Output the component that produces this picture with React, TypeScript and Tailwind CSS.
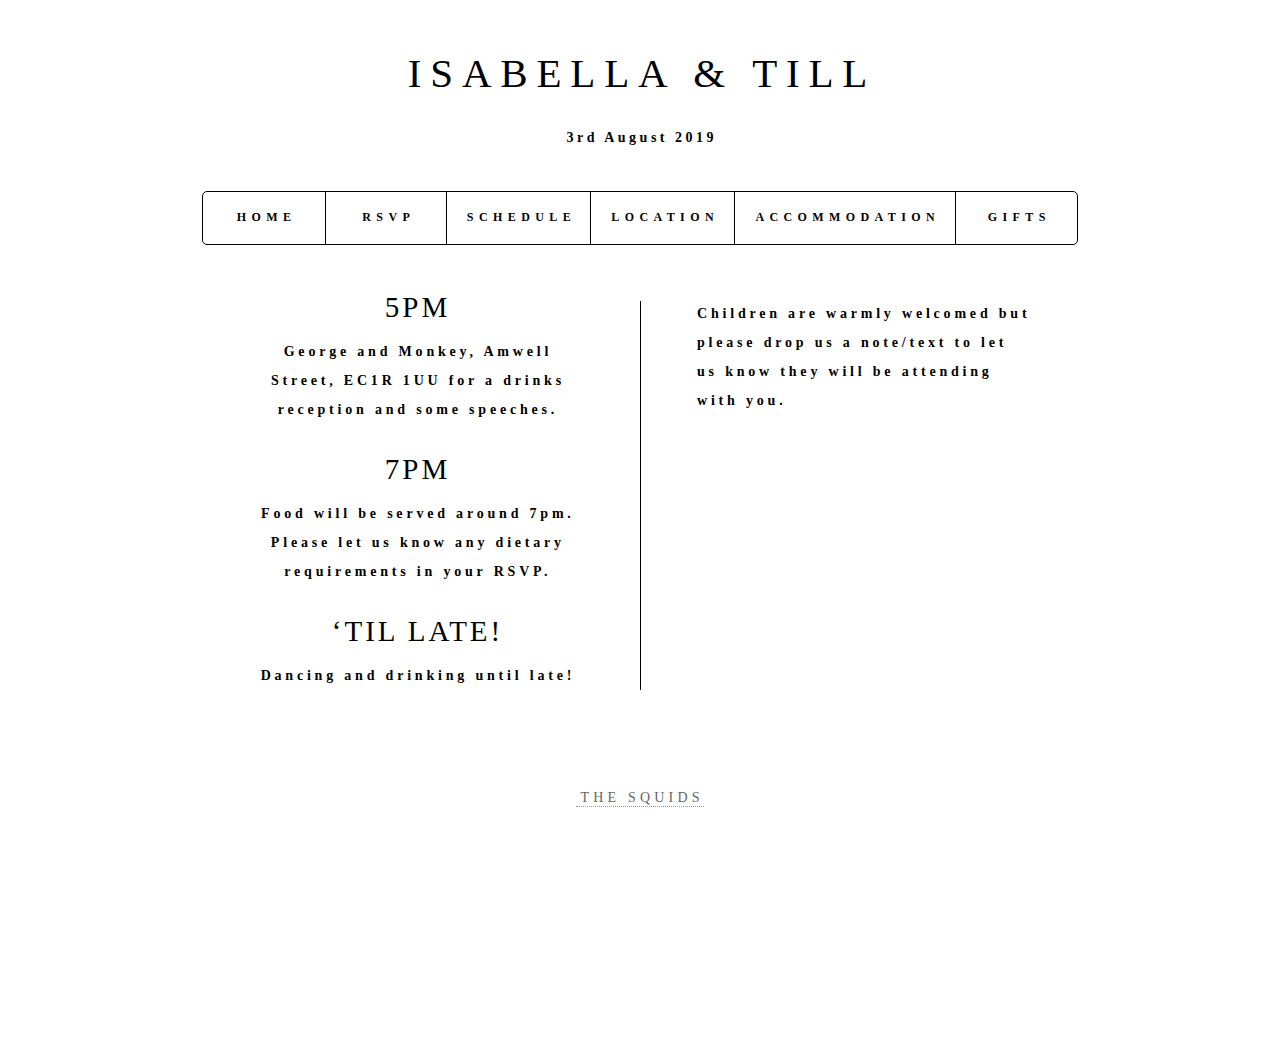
import React from 'react';

const navItems = [
  { label: 'HOME', width: 'w-[122px]' },
  { label: 'RSVP', width: 'w-[122px]' },
  { label: 'SCHEDULE', width: 'w-[144px]' },
  { label: 'LOCATION', width: 'w-[144px]' },
  { label: 'ACCOMMODATION', width: 'w-[222px]' },
  { label: 'GIFTS', width: 'w-[122px]' },
];

const schedule = [
  {
    time: '5PM',
    text: 'George and Monkey, Amwell Street, EC1R 1UU for a drinks reception and some speeches.',
  },
  {
    time: '7PM',
    text: 'Food will be served around 7pm. Please let us know any dietary requirements in your RSVP.',
  },
  {
    time: '‘TIL LATE!',
    text: 'Dancing and drinking until late!',
  },
];

export default function App() {
  return (
    <div className="min-h-screen bg-white text-black font-['Liberation_Serif',serif]">
      <header className="pt-[53px] text-center">
        <h1 className="text-[41px] leading-[41px] tracking-[8.8px] pl-[4px] font-normal">
          ISABELLA &amp; TILL
        </h1>
        <p className="mt-[34px] text-[14px] leading-[20px] tracking-[3.5px] pl-[3.5px] font-bold">
          3rd August 2019
        </p>
      </header>

      <nav className="mx-auto mt-[43px] flex w-[876px] h-[54px] rounded-[5px] border border-black">
        {navItems.map((item, i) => (
          <a
            key={item.label}
            href="#"
            className={`${item.width} flex items-center justify-center pb-[2px] text-[12px] font-bold tracking-[5.4px] pl-[5.4px] ${
              i > 0 ? 'border-l border-black' : ''
            }`}
          >
            {item.label}
          </a>
        ))}
      </nav>

      <main className="mx-auto mt-[46px] grid w-[896px] grid-cols-2">
        <div className="flex flex-col items-center">
          {schedule.map((s, i) => (
            <section key={s.time} className={`flex flex-col items-center ${i > 0 ? 'mt-[29px]' : ''}`}>
              <h2 className="text-[29px] leading-[32px] tracking-[3px] pl-[3px] font-normal">{s.time}</h2>
              <p className="mt-[14px] w-[330px] text-center text-[14px] leading-[29px] tracking-[3.8px] pl-[3.8px] font-bold">
                {s.text}
              </p>
            </section>
          ))}
        </div>
        <div className="mt-[10px] border-l border-black pl-[56px]">
          <p className="-mt-[2px] w-[337px] text-[14px] leading-[29px] tracking-[3.8px] font-bold">
            Children are warmly welcomed but please drop us a note/text to let us know they will be attending with
            you.
          </p>
        </div>
      </main>

      <footer className="mt-[95px] pb-[200px] text-center">
        <a
          href="#"
          className="text-[14px] tracking-[4.2px] pl-[4.2px] text-[#666] border-b border-dotted border-[#999] pb-[1px]"
        >
          THE SQUIDS
        </a>
      </footer>
    </div>
  );
}
